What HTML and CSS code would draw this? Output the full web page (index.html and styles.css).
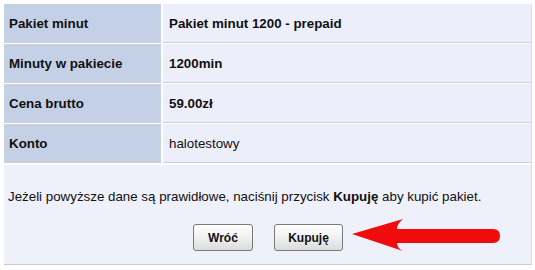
FILE: index.html
```html
<!DOCTYPE html>
<html lang="pl">
<head>
<meta charset="utf-8">
<title>Pakiet minut</title>
<link rel="stylesheet" href="styles.css">
</head>
<body>
<div class="wrap">
  <div class="rows">
    <div class="row"><div class="label">Pakiet minut</div><div class="value bold">Pakiet minut 1200 - prepaid</div></div>
    <div class="row"><div class="label">Minuty w pakiecie</div><div class="value bold">1200min</div></div>
    <div class="row"><div class="label">Cena brutto</div><div class="value bold">59.00zł</div></div>
    <div class="row"><div class="label">Konto</div><div class="value">halotestowy</div></div>
  </div>
  <div class="panel">
    <p class="info">Jeżeli powyższe dane są prawidłowe, naciśnij przycisk <b>Kupuję</b> aby kupić pakiet.</p>
    <div class="actions">
      <button class="btn btn-back">Wróć</button>
      <button class="btn btn-buy">Kupuję</button>
      <svg class="arrow" width="152" height="36" viewBox="0 0 152 36" aria-hidden="true">
        <path d="M2 16 L53 1 Q47 6 47 11 L143 11 Q150 11 150 18 Q150 25 143 25 L47 25 Q47 30 53 33 Z" fill="#f00c0c"/>
      </svg>
    </div>
  </div>
</div>
</body>
</html>
```

FILE: styles.css
```css
* { box-sizing: border-box; }
html, body { margin: 0; padding: 0; background: #ffffff; }
body {
  font-family: "Liberation Sans", Arial, sans-serif;
  font-size: 13.33px;
  color: #000;
}
.wrap {
  width: 528px;
  margin: 4px 0 0 4px;
  border-right: 1px solid #dcdde4;
}
.rows { display: flex; flex-direction: column; }
.row {
  display: grid;
  grid-template-columns: 157px 1fr;
  column-gap: 2px;
  height: 40px;
  border-bottom: 1px solid #ffffff;
}
.label, .value {
  display: flex;
  align-items: center;
  border-bottom: 1px solid #cfcfd4;
}
.label {
  background: #c4d0e6;
  font-weight: bold;
  padding-left: 5px;
  color: #111;
}
.value {
  background: #eceef9;
  padding-left: 6px;
  color: #111;
}
.value.bold { font-weight: bold; }
.row:last-child { height: 41px; border-bottom: 2px solid #fff; }
.panel {
  background: #eef0fa;
  height: 100px;
  border-bottom: 1px solid #c8c8cc;
  padding-top: 24px;
}
.info {
  margin: 0 0 0 4px;
  line-height: 16px;
  color: #111;
}
.actions {
  display: flex;
  align-items: center;
  margin-top: 16px;
  padding-left: 189px;
}
.btn {
  font-family: "Liberation Sans", Arial, sans-serif;
  font-size: 12px;
  font-weight: bold;
  color: #111;
  height: 27px;
  border: 1px solid #7a7a7a;
  border-radius: 3px;
  background: linear-gradient(#ffffff 0%, #f2f2f2 45%, #dcdcdc 100%);
  padding: 0;
}
.btn-back { width: 60px; }
.btn-buy { width: 69px; margin-left: 21px; }
.arrow { margin-left: 7px; margin-top: -3px; }
```
